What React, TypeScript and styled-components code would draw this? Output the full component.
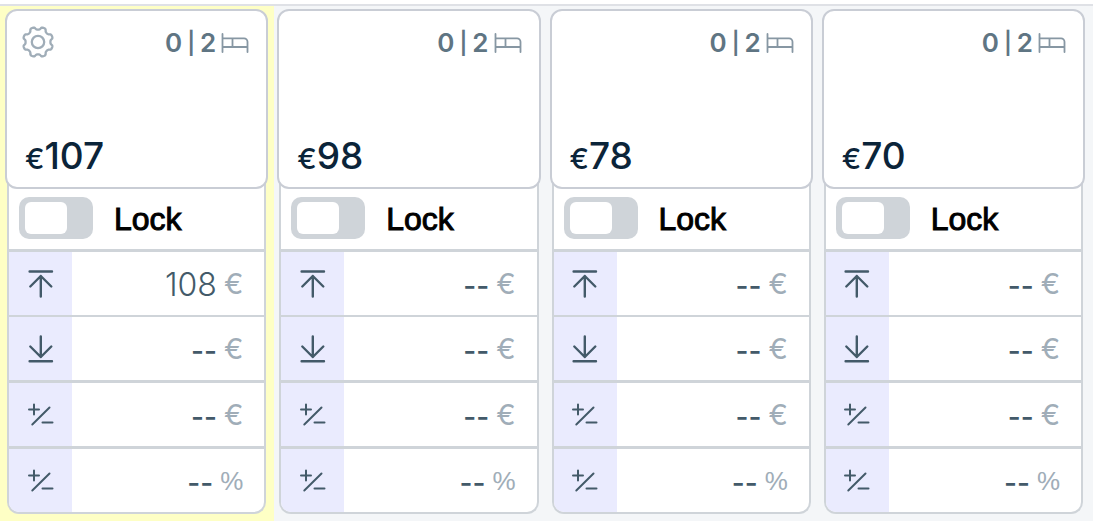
import React, { useState } from 'react';
import styled, { createGlobalStyle, css } from 'styled-components';

const GlobalStyle = createGlobalStyle`
  *, *::before, *::after { box-sizing: border-box; }
  body {
    margin: 0;
    background: #f4f6f8;
    font-family: Inter, "Liberation Sans", sans-serif;
  }
`;

const Board = styled.main`
  display: grid;
  grid-template-columns: repeat(4, minmax(0, 1fr));
  padding: 4px 2px 0;
  background: linear-gradient(#ffffff 4px, #dfe1e6 4px, #dfe1e6 6px, transparent 6px);
`;

const Column = styled.section<{ $highlighted?: boolean }>`
  margin-top: 2px;
  padding: 3px 6px 7px 3px;
  ${({ $highlighted }) =>
    $highlighted &&
    css`
      margin-left: -2px;
      padding-left: 5px;
      background: #feffc5;
    `}
`;

const PriceCard = styled.header`
  position: relative;
  display: flex;
  flex-direction: column;
  justify-content: space-between;
  height: 180px;
  padding: 14px 17px 8px 18px;
  border: 2px solid #c9cdd5;
  border-radius: 12px;
  background: #fff;
`;

const CardTop = styled.div`
  display: flex;
  align-items: center;
  height: 34px;
`;

const SettingsButton = styled.button`
  display: flex;
  margin: 0 0 0 -4px;
  padding: 0;
  border: 0;
  background: none;
  color: #a0adb8;
  cursor: pointer;
`;

const Occupancy = styled.div`
  display: flex;
  align-items: center;
  gap: 5px;
  margin-left: auto;
  padding-top: 2px;
  color: #5f7583;
  font-size: 26px;
  font-weight: 600;
  line-height: 32px;
`;

const Divider = styled.span`
  font-size: 22px;
`;

const Price = styled.div`
  color: #0b2439;
  font-size: 37px;
  font-weight: 500;
  line-height: 40px;
`;

const Currency = styled.span`
  font-size: 29px;
`;

const Panel = styled.div`
  margin: -12px 2px 0;
  padding-top: 12px;
  overflow: hidden;
  border: 2px solid #cfd4d9;
  border-top: 0;
  border-radius: 0 0 12px 12px;
  background: #fff;
`;

const LockRow = styled.label`
  display: flex;
  align-items: center;
  gap: 21px;
  height: 60px;
  padding: 0 0 2px 10px;
  color: #000;
  font-family: "Liberation Sans", Arial, sans-serif;
  font-size: 32px;
  line-height: 40px;
  -webkit-text-stroke: 1px #000;
`;

const LockText = styled.span`
  padding-top: 2px;
`;

const Toggle = styled.input`
  appearance: none;
  display: flex;
  width: 74px;
  height: 42px;
  margin: 0;
  padding: 5px 6px;
  border-radius: 10px;
  background: #cfd4d9;
  cursor: pointer;

  &::before {
    content: '';
    width: 42px;
    border-radius: 6px;
    background: #fff;
  }
  &:checked {
    justify-content: flex-end;
    background: #5f7583;
  }
`;

const Field = styled.label<{ $thin?: boolean }>`
  display: flex;
  align-items: stretch;
  border-top: ${({ $thin }) => ($thin ? 2 : 3)}px solid #cfd4d9;
`;

const IconCell = styled.span`
  display: flex;
  flex: none;
  align-items: center;
  justify-content: center;
  width: 63px;
  height: 63px;
  background: #eaebfe;
  color: #435a69;
`;

const Entry = styled.span`
  display: flex;
  flex: 1;
  align-items: center;
  gap: 7px;
  min-width: 0;
  padding-right: 21px;
`;

const Value = styled.input`
  flex: 1;
  min-width: 0;
  padding: 2px 0 0;
  border: 0;
  outline: 0;
  background: none;
  color: #435a69;
  font: 300 32px/40px Inter, "Liberation Sans", sans-serif;
  text-align: right;

  &::placeholder {
    color: #435a69;
    font-size: 28px;
    font-weight: 500;
    opacity: 1;
  }
`;

const Unit = styled.span<{ $percent: boolean }>`
  color: #a0adb8;
  font-size: 29px;
  line-height: 36px;
  ${({ $percent }) =>
    $percent &&
    css`
      font-family: "Liberation Sans", Arial, sans-serif;
      font-size: 26px;
    `}
`;

// Eight rounded teeth, with valleys on the main axes and diagonals.
const gearOutline =
  Array.from({ length: 128 }, (_, i) => {
    const angle = (i / 128) * Math.PI * 2;
    const radius = 13.8 - 1.4 * Math.tanh(2 * Math.cos(8 * angle));
    const x = 17 + radius * Math.cos(angle);
    const y = 17 + radius * Math.sin(angle);
    return `${i ? 'L' : 'M'}${x.toFixed(2)} ${y.toFixed(2)}`;
  }).join('') + 'Z';

const GearIcon = () => (
  <svg width="34" height="34" viewBox="0 0 34 34" fill="none" stroke="currentColor" strokeWidth="2.3" strokeLinejoin="round" aria-hidden="true">
    <circle cx="17" cy="17" r="6.2" />
    <path d={gearOutline} />
  </svg>
);

const BedIcon = () => (
  <svg width="28" height="20" viewBox="0 0 28 20" fill="none" stroke="#8797a3" strokeWidth="1.8" strokeLinecap="round" aria-hidden="true">
    <path d="M1.500 1v18M1.500 5.300H23a3.500 3.500 0 0 1 3.500 3.500V19M1.500 14h25M11.500 5.300v8.700" />
  </svg>
);

const MaxIcon = () => (
  <svg width="28" height="30" viewBox="0 0 28 30" fill="none" stroke="currentColor" strokeWidth="2.4" strokeLinecap="round" strokeLinejoin="round" aria-hidden="true">
    <path d="M2.600 2.500h22.400M13.800 27.500V7M3.300 17.500L13.800 7l10.500 10.500" />
  </svg>
);

const MinIcon = () => (
  <svg width="28" height="30" viewBox="0 0 28 30" fill="none" stroke="currentColor" strokeWidth="2.4" strokeLinecap="round" strokeLinejoin="round" aria-hidden="true">
    <path d="M2.600 27.200h22.400M13.800 2.500v20.500M3.300 12.500l10.500 10.500 10.500-10.500" />
  </svg>
);

const PlusMinusIcon = () => (
  <svg width="28" height="26" viewBox="0 0 28 26" fill="none" stroke="currentColor" strokeWidth="2" strokeLinecap="round" aria-hidden="true">
    <path d="M2 7.500h10M7 2.500v10M5.300 22.500L22.500 5.500M15.500 20.500h10" />
  </svg>
);

const rules = [
  { name: 'Maximum price', unit: '€', Icon: MaxIcon, thin: false },
  { name: 'Minimum price', unit: '€', Icon: MinIcon, thin: true },
  { name: 'Adjust by amount', unit: '€', Icon: PlusMinusIcon, thin: false },
  { name: 'Adjust by percent', unit: '%', Icon: PlusMinusIcon, thin: false },
];

type Day = { price: number; max: string; today?: boolean };

const days: Day[] = [
  { price: 107, max: '108', today: true },
  { price: 98, max: '' },
  { price: 78, max: '' },
  { price: 70, max: '' },
];

function DayColumn({ day }: { day: Day }) {
  const [values, setValues] = useState([day.max, '', '', '']);
  const [locked, setLocked] = useState(false);
  return (
    <Column $highlighted={day.today}>
      <PriceCard>
        <CardTop>
          {day.today && (
            <SettingsButton type="button" aria-label="Settings">
              <GearIcon />
            </SettingsButton>
          )}
          <Occupancy>
            <span>0</span>
            <Divider>|</Divider>
            <span>2</span>
            <BedIcon />
          </Occupancy>
        </CardTop>
        <Price>
          <Currency>€</Currency>
          {day.price}
        </Price>
      </PriceCard>
      <Panel>
        <LockRow>
          <Toggle type="checkbox" checked={locked} onChange={(e) => setLocked(e.target.checked)} />
          <LockText>Lock</LockText>
        </LockRow>
        {rules.map(({ name, unit, Icon, thin }, i) => (
          <Field key={name} $thin={thin}>
            <IconCell>
              <Icon />
            </IconCell>
            <Entry>
              <Value
                aria-label={name}
                placeholder="--"
                value={values[i]}
                onChange={(e) => setValues(values.map((v, j) => (j === i ? e.target.value : v)))}
              />
              <Unit $percent={unit === '%'}>{unit}</Unit>
            </Entry>
          </Field>
        ))}
      </Panel>
    </Column>
  );
}

export default function App() {
  return (
    <>
      <GlobalStyle />
      <Board>
        {days.map((day) => (
          <DayColumn key={day.price} day={day} />
        ))}
      </Board>
    </>
  );
}
